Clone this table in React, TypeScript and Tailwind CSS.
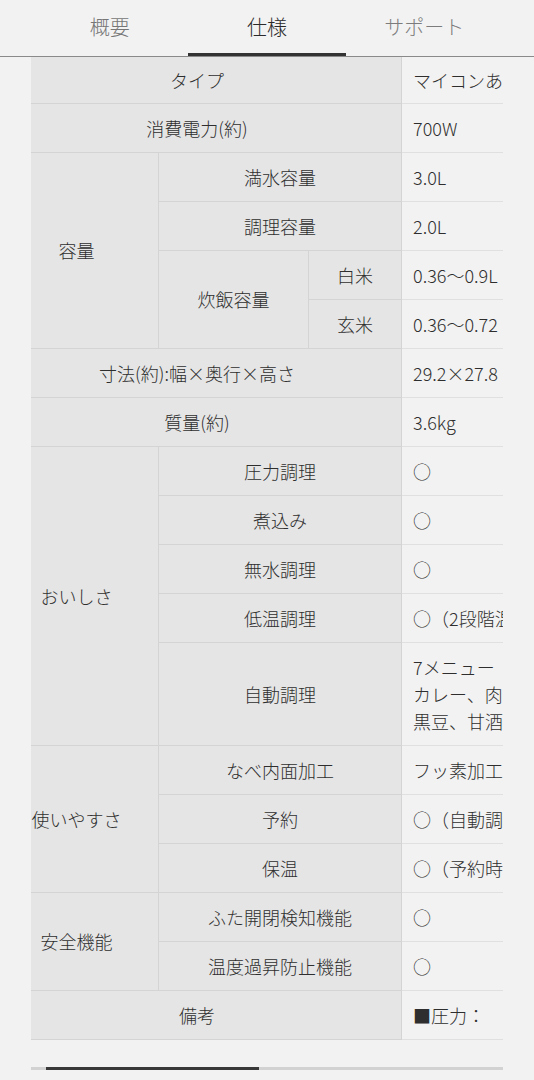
import React from "react";

const H = "bg-[#e5e5e5] border-r border-b border-[#d4d4d4] flex items-center justify-center text-center";
const V = "bg-[#f2f2f2] border-b border-[#e0e0e0] flex items-center pl-[11px] whitespace-nowrap";

export default function App() {
  return (
    <div className="min-h-screen w-full bg-[#f2f2f2] text-[#2e2e2e] font-light font-['Noto_Sans_CJK_JP','Noto_Sans',sans-serif]">
      <div className="h-[57px] border-b border-[#8a8a8a]">
        <div className="mx-[31px] w-[472px] flex h-full">
          <div className="flex-1 flex items-center justify-center pb-[2px] text-[20px] text-[#767676]">概要</div>
          <div className="flex-1 relative flex items-center justify-center pb-[2px] text-[20px] text-[#2a2a2a]">
            仕様
            <div className="absolute left-0 right-0 bottom-0 h-[3px] bg-[#333]" />
          </div>
          <div className="flex-1 flex items-center justify-center pb-[2px] text-[20px] text-[#7c7c7c]">サポート</div>
        </div>
      </div>

      <div className="ml-[31px] w-[472px] overflow-hidden">
        <div className="grid grid-cols-[128px_150px_93px_680px] grid-rows-[47px_repeat(11,49px)_103px_repeat(6,49px)] text-[18px] leading-[27px]">
          <div className={`${H} col-span-3 pr-[38px]`}>タイプ</div>
          <div className={V}>マイコンあり</div>

          <div className={`${H} col-span-3 pr-[38px]`}>消費電力(約)</div>
          <div className={V}>700W</div>

          <div className={`${H} row-span-4 pr-[36px]`}>容量</div>
          <div className={`${H} col-span-2`}>満水容量</div>
          <div className={V}>3.0L</div>
          <div className={`${H} col-span-2`}>調理容量</div>
          <div className={V}>2.0L</div>
          <div className={`${H} row-span-2`}>炊飯容量</div>
          <div className={H}>白米</div>
          <div className={V}>0.36〜0.9L</div>
          <div className={H}>玄米</div>
          <div className={V}>0.36〜0.72 L</div>

          <div className={`${H} col-span-3 pr-[38px]`}>寸法(約):幅×奥行×高さ</div>
          <div className={V}>29.2×27.8 ×27.0cm</div>

          <div className={`${H} col-span-3 pr-[38px]`}>質量(約)</div>
          <div className={V}>3.6kg</div>

          <div className={`${H} row-span-5 pr-[36px]`}>おいしさ</div>
          <div className={`${H} col-span-2`}>圧力調理</div>
          <div className={V}>○</div>
          <div className={`${H} col-span-2`}>煮込み</div>
          <div className={V}>○</div>
          <div className={`${H} col-span-2`}>無水調理</div>
          <div className={V}>○</div>
          <div className={`${H} col-span-2`}>低温調理</div>
          <div className={V}>○（2段階温度設定）</div>
          <div className={`${H} col-span-2`}>自動調理</div>
          <div className={V}>
            <div>
              7メニュー<br />
              カレー、肉じゃが、豚の角煮、<br />
              黒豆、甘酒、ヨーグルト、ローストビーフ
            </div>
          </div>

          <div className={`${H} row-span-3 pr-[36px]`}>使いやすさ</div>
          <div className={`${H} col-span-2`}>なべ内面加工</div>
          <div className={V}>フッ素加工</div>
          <div className={`${H} col-span-2`}>予約</div>
          <div className={V}>○（自動調理メニューのみ）</div>
          <div className={`${H} col-span-2`}>保温</div>
          <div className={V}>○（予約時のみ）</div>

          <div className={`${H} row-span-2 pr-[36px]`}>安全機能</div>
          <div className={`${H} col-span-2`}>ふた開閉検知機能</div>
          <div className={V}>○</div>
          <div className={`${H} col-span-2`}>温度過昇防止機能</div>
          <div className={V}>○</div>

          <div className={`${H} col-span-3 pr-[38px]`}>備考</div>
          <div className={V}>■圧力：　約70kPa</div>
        </div>
      </div>

      <div className="ml-[31px] w-[472px] mt-[27px] h-[3px] bg-[#d2d2d2] pl-[15px]">
        <div className="w-[213px] h-full bg-[#383838]" />
      </div>
    </div>
  );
}
